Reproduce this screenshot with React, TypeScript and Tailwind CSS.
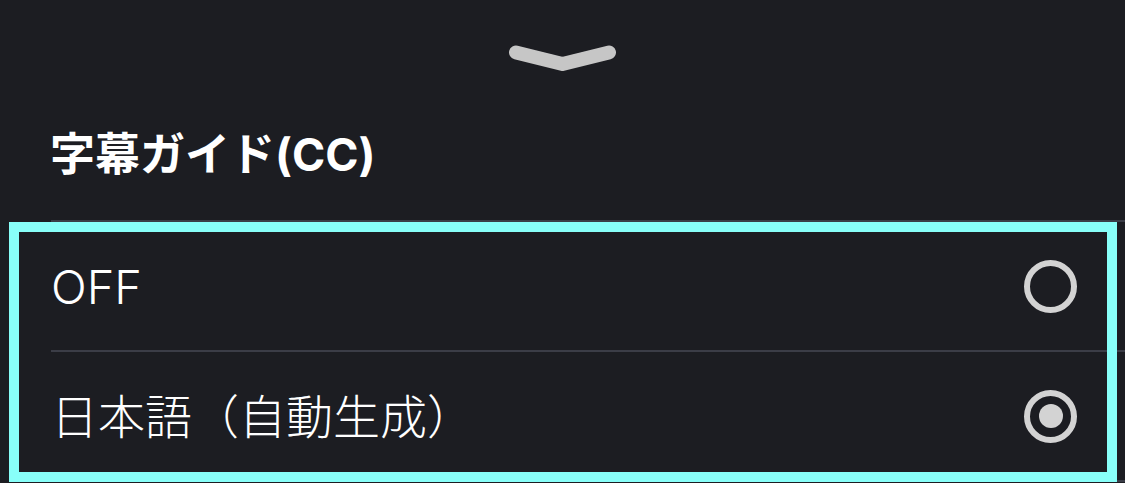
import React, { useState } from "react";

type Option = {
  id: string;
  label: string;
};

const OPTIONS: Option[] = [
  { id: "off", label: "OFF" },
  { id: "ja-auto", label: "日本語（自動生成）" },
];

const FONT = { fontFamily: '"Inter", "Noto Sans CJK JP", sans-serif' };

// =========================================================
// RADIO
// =========================================================
const Radio = ({ checked }: { checked: boolean }) => (
  <span
    className="
      flex
      h-[53px]
      w-[53px]
      items-center
      justify-center
      rounded-full
      border-[6px]
      border-[#d3d3d3]
    "
  >
    {checked && <span className="h-[24px] w-[24px] rounded-full bg-[#d3d3d3]" />}
  </span>
);

const App = () => {
  const [selected, setSelected] = useState("ja-auto");

  return (
    <div
      className="relative h-[483px] w-[1125px] overflow-hidden bg-[#1c1d22] text-white"
      style={FONT}
    >
      {/* HEADER */}
      <div className="flex h-[220px] flex-col">
        <div className="flex h-[118px] items-center justify-center">
          <svg width="120" height="40" viewBox="0 0 120 40" fill="none">
            <path
              d="M13 13.5 L59.5 25 L106 13.5"
              stroke="#c6c6c6"
              strokeWidth="14"
              strokeLinecap="round"
              strokeLinejoin="round"
            />
          </svg>
        </div>

        <h2 className="pl-[50px] pt-[7px] text-[45px] font-bold leading-[60px]">
          字幕ガイド(CC)
        </h2>
      </div>

      {/* OPTIONS */}
      <ul className="ml-[51px] border-b-2 border-[#3b3d47]">
        {OPTIONS.map((option) => (
          <li
            key={option.id}
            onClick={() => setSelected(option.id)}
            className="
              flex
              h-[130px]
              items-center
              justify-between
              border-t-2
              border-[#3b3d47]
              pr-[48px]
              text-[47px]
              font-light
            "
          >
            <span className="pt-[2px]">{option.label}</span>
            <Radio checked={selected === option.id} />
          </li>
        ))}
      </ul>

      {/* FOCUS RING */}
      <div
        className="
          pointer-events-none
          absolute
          left-[9px]
          top-[222px]
          h-[260px]
          w-[1108px]
          border-[10px]
          border-[#88fff9]
        "
      />
    </div>
  );
};

export default App;
